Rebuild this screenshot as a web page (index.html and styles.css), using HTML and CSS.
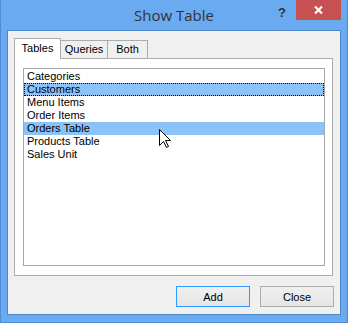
FILE: index.html
```html
<!DOCTYPE html>
<html lang="en">
<head>
    <meta charset="UTF-8">
    <title>Show Table</title>
    <link rel="stylesheet" href="styles.css">
</head>
<body>
    <div class="window">
        <div class="titlebar">
            <div></div>
            <div class="title">Show Table</div>
            <div class="controls">
                <span class="help">?</span>
                <span class="close">
                    <svg width="9" height="8" viewBox="0 0 9 8">
                        <path d="M1 0.5 L8 7.5 M8 0.5 L1 7.5" stroke="#fff" stroke-width="2.2"/>
                    </svg>
                </span>
            </div>
        </div>

        <div class="client">
            <div class="tabs">
                <div class="tab active" style="width:47px">Tables</div>
                <div class="tab" style="width:48px">Queries</div>
                <div class="tab" style="width:41px">Both</div>
            </div>

            <div class="panel">
                <div class="list">
                    <div class="row">Categories</div>
                    <div class="row selected focused">Customers</div>
                    <div class="row">Menu Items</div>
                    <div class="row">Order Items</div>
                    <div class="row selected">Orders Table</div>
                    <div class="row">Products Table</div>
                    <div class="row">Sales Unit</div>
                </div>
            </div>

            <div class="buttons">
                <button class="btn default">Add</button>
                <button class="btn">Close</button>
            </div>
        </div>

        <!-- mouse pointer -->
        <svg class="cursor" width="13" height="20" viewBox="0 0 13 20">
            <path d="M0.5 0.5 L0.5 16.5 L4.5 12.5 L7.5 18.5 L9.5 17.5 L6.5 11.5 L11.5 11.5 Z"
                  fill="#fff" stroke="#000" stroke-width="1" stroke-linejoin="miter"/>
        </svg>
    </div>
</body>
</html>
```

FILE: styles.css
```css
body {
    margin: 0;
    font-family: "Liberation Sans", Arial, sans-serif;
    font-size: 11px;
    color: #000;
}

.window {
    position: relative;
    width: 348px;
    height: 323px;
    box-sizing: border-box;
    background: #6aaaf0;
    border: 1px solid #4f8ad4;
    border-top: none;
    padding: 0 6px 7px 6px;
    display: flex;
    flex-direction: column;
}

.titlebar {
    height: 30px;
    display: grid;
    grid-template-columns: 1fr auto 1fr;
}

.title {
    font-family: "Open Sans", "Noto Sans", sans-serif;
    font-size: 15px;
    color: #333;
    line-height: 30px;
}

.controls {
    display: flex;
    justify-content: flex-end;
    align-items: flex-start;
}

.help {
    font-weight: bold;
    font-size: 13px;
    color: #333;
    margin-top: 5px;
    margin-right: 10px;
}

.close {
    width: 45px;
    height: 20px;
    background: #c75050;
    display: flex;
    align-items: center;
    justify-content: center;
}

.client {
    flex: 1;
    background: #f0f0f0;
    border: 1px solid #4f86c6;
    padding: 7px 7px 7px 6px;
    display: flex;
    flex-direction: column;
}

.tabs {
    display: flex;
    align-items: flex-end;
    height: 20px;
}

.tab {
    height: 18px;
    box-sizing: border-box;
    border: 1px solid #acacac;
    border-bottom: none;
    background: #f0f0f0;
    margin-left: -1px;
    text-align: center;
    line-height: 17px;
}

.tab.active {
    height: 21px;
    margin-left: 0;
    margin-bottom: -1px;
    background: #fff;
    position: relative;
    z-index: 1;
    line-height: 19px;
}

.panel {
    height: 218px;
    box-sizing: border-box;
    background: #fff;
    border: 1px solid #acacac;
    padding: 9px 7px 9px 8px;
    display: flex;
    flex-direction: column;
}

.list {
    flex: 1;
    border: 1px solid #a8a8a8;
    padding-top: 1px;
}

.row {
    height: 13px;
    line-height: 13px;
    padding-left: 3px;
}

.row.selected {
    background: #8bc3f9;
}

.row.focused {
    outline: 1px dotted #000;
    outline-offset: -1px;
}

.buttons {
    display: flex;
    justify-content: flex-end;
    gap: 10px;
    margin-top: 10px;
    margin-right: -1px;
}

.btn {
    width: 74px;
    height: 21px;
    box-sizing: border-box;
    border: 1px solid #acacac;
    background: linear-gradient(#f0f0f0, #e5e5e5);
    font-family: "Liberation Sans", Arial, sans-serif;
    font-size: 11px;
    color: #000;
    padding: 0;
}

.btn.default {
    border-color: #3399ff;
}

.cursor {
    position: absolute;
    left: 158px;
    top: 129px;
}
```
